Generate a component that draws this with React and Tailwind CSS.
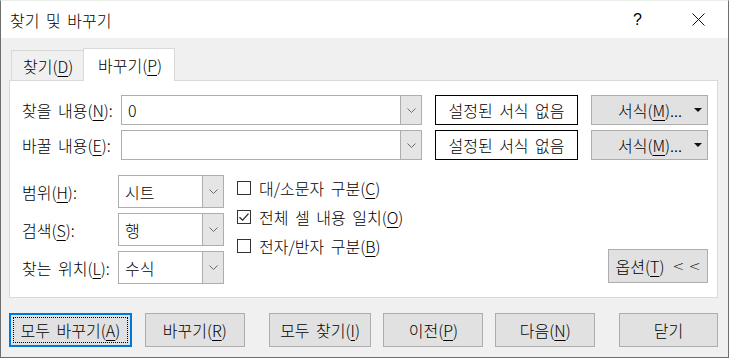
import React from 'react';

const U = ({ children }) => (
  <u className="underline underline-offset-[3px] decoration-1">{children}</u>
);

function Chevron() {
  return (
    <svg width="9" height="5" viewBox="0 0 9 5">
      <path d="M0.5 0.5 L4.5 4.5 L8.5 0.5" fill="none" stroke="#6b6b6b" strokeWidth="1" />
    </svg>
  );
}

function Combo({ value, className, btn }) {
  return (
    <div className={`flex bg-white border border-[#adadad] ${className}`}>
      <div className="flex-1 flex items-center pl-[6px] leading-none">{value}</div>
      <div className={`flex items-center justify-center bg-[#e5e5e5] border-l border-[#adadad] ${btn}`}>
        <Chevron />
      </div>
    </div>
  );
}

function Check({ checked, children }) {
  return (
    <div className="h-[29px] flex items-center">
      <div className="w-[14px] h-[14px] border border-[#333333] bg-white flex items-center justify-center">
        {checked && (
          <svg width="12" height="12" viewBox="0 0 12 12">
            <path d="M1.5 6.2 L4.6 9.2 L10.5 2.6" fill="none" stroke="#222" strokeWidth="1.2" />
          </svg>
        )}
      </div>
      <span className="ml-[8px] leading-none">{children}</span>
    </div>
  );
}

function Btn({ children, className }) {
  return (
    <div className={`h-[34px] flex items-center justify-center bg-[#e1e1e1] border border-[#adadad] leading-none whitespace-nowrap ${className}`}>
      {children}
    </div>
  );
}

export default function App() {
  return (
    <div className="w-[729px] h-[358px] bg-[#f0f0f0] border border-[#6e6e6e] border-t-[#e8efe9] flex flex-col text-[16px] font-light [word-spacing:3px] text-black font-['Noto_Sans_CJK_KR','Noto_Sans',sans-serif] overflow-hidden">
      {/* Title bar */}
      <div className="h-[37px] bg-white flex items-center shrink-0">
        <span className="ml-[9px] leading-none">찾기 및 바꾸기</span>
        <span className="ml-auto mr-[50px] leading-none text-[16px] font-['Liberation_Sans',sans-serif]">?</span>
        <svg className="mr-[23px]" width="13" height="13" viewBox="0 0 13 13">
          <path d="M0.5 0.5 L12.5 12.5 M12.5 0.5 L0.5 12.5" stroke="#111" strokeWidth="1" />
        </svg>
      </div>

      {/* Body */}
      <div className="flex-1 flex flex-col pl-[8px] pr-[10px] pt-[10px]">
        {/* Tabs */}
        <div className="flex items-end h-[32px] pl-[2px]">
          <div className="h-[30px] w-[72px] border border-r-0 border-b-0 border-[#d9d9d9] flex items-center pl-[11px] leading-none">
            찾기(<U>D</U>)
          </div>
          <div className="relative h-[33px] w-[92px] -mb-px bg-white border border-b-0 border-[#d9d9d9] flex items-center pl-[14px] leading-none z-10">
            바꾸기(<U>P</U>)
          </div>
        </div>

        {/* Panel */}
        <div className="h-[218px] bg-white border border-[#d9d9d9] flex flex-col pl-[12px] pr-[9px] pt-[14px]">
          <div className="flex items-center h-[30px]">
            <span className="w-[99px] leading-none whitespace-nowrap">찾을 내용(<U>N</U>):</span>
            <Combo value="0" className="w-[301px] h-[30px]" btn="w-[21px]" />
            <div className="ml-[13px] w-[143px] h-[30px] border border-black flex items-center justify-center leading-none">
              설정된 서식 없음
            </div>
            <div className="ml-[13px] w-[117px] h-[30px] bg-[#e1e1e1] border border-[#adadad] flex items-center leading-none">
              <span className="ml-[26px]">서식(<U>M</U>)...</span>
              <svg className="ml-auto mr-[5px]" width="8" height="4" viewBox="0 0 8 4">
                <path d="M0 0 L8 0 L4 4 Z" fill="#111" />
              </svg>
            </div>
          </div>
          <div className="flex items-center h-[30px] mt-[5px]">
            <span className="w-[99px] leading-none whitespace-nowrap">바꿀 내용(<U>E</U>):</span>
            <Combo value="" className="w-[301px] h-[30px]" btn="w-[21px]" />
            <div className="ml-[13px] w-[143px] h-[30px] border border-black flex items-center justify-center leading-none">
              설정된 서식 없음
            </div>
            <div className="ml-[13px] w-[117px] h-[30px] bg-[#e1e1e1] border border-[#adadad] flex items-center leading-none">
              <span className="ml-[26px]">서식(<U>M</U>)...</span>
              <svg className="ml-auto mr-[5px]" width="8" height="4" viewBox="0 0 8 4">
                <path d="M0 0 L8 0 L4 4 Z" fill="#111" />
              </svg>
            </div>
          </div>

          <div className="flex mt-[15px]">
            <div className="flex flex-col gap-[5px]">
              <div className="flex items-center h-[33px]">
                <span className="w-[96px] leading-none">범위(<U>H</U>):</span>
                <Combo value="시트" className="w-[106px] h-[33px]" btn="w-[21px]" />
              </div>
              <div className="flex items-center h-[33px]">
                <span className="w-[96px] leading-none">검색(<U>S</U>):</span>
                <Combo value="행" className="w-[106px] h-[33px]" btn="w-[21px]" />
              </div>
              <div className="flex items-center h-[33px]">
                <span className="w-[96px] leading-none whitespace-nowrap">찾는 위치(<U>L</U>):</span>
                <Combo value="수식" className="w-[106px] h-[33px]" btn="w-[21px]" />
              </div>
            </div>
            <div className="flex flex-col ml-[13px] -mt-[2px]">
              <Check>대/소문자 구분(<U>C</U>)</Check>
              <Check checked>전체 셀 내용 일치(<U>O</U>)</Check>
              <Check>전자/반자 구분(<U>B</U>)</Check>
            </div>
            <div className="ml-auto flex items-end pb-[1px]">
              <Btn className="w-[100px]">
                옵션(<U>T</U>)<span className="ml-[8px] text-[14px] [word-spacing:0px] font-['DejaVu_Sans',sans-serif]">&lt; &lt;</span>
              </Btn>
            </div>
          </div>
        </div>

        {/* Bottom buttons */}
        <div className="flex mt-[15px] items-center">
          <div className="w-[123px] h-[34px] border-2 border-[#0078d7] bg-[#e1e1e1] p-[2px]">
            <div className="w-full h-full border border-dotted border-black flex items-center justify-center leading-none whitespace-nowrap">
              모두 바꾸기(<U>A</U>)
            </div>
          </div>
          <Btn className="w-[100px] ml-[13px]">바꾸기(<U>R</U>)</Btn>
          <Btn className="w-[103px] ml-[24px]">모두 찾기(<U>I</U>)</Btn>
          <Btn className="w-[100px] ml-[12px]">이전(<U>P</U>)</Btn>
          <Btn className="w-[100px] ml-[12px]">다음(<U>N</U>)</Btn>
          <Btn className="w-[99px] ml-[24px]">닫기</Btn>
        </div>
      </div>
    </div>
  );
}
